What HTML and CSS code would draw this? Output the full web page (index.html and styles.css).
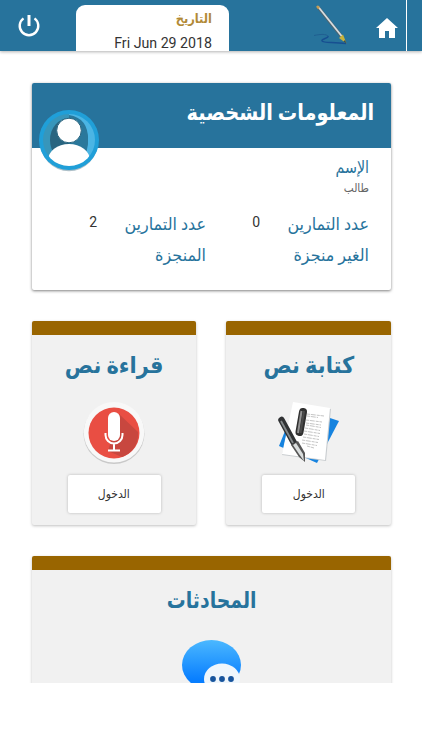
FILE: index.html
```html
<!DOCTYPE html>
<html lang="ar">
<head>
    <meta charset="utf-8">
    <title>المعلومات الشخصية</title>
    <link rel="stylesheet" href="styles.css">
</head>
<body>
<!-- Top bar -->
<header class="topbar">
    <svg class="power-icon" viewBox="0 0 24 24" width="24" height="24">
        <path d="M6.500 4.400A9.300 9.300 0 1 0 17.500 4.400" fill="none" stroke="#fff" stroke-width="2.400"/>
        <path d="M12 1V12" stroke="#fff" stroke-width="3"/>
    </svg>
    <div class="date-box">
        <div class="date-label" dir="rtl">التاريخ</div>
        <div class="date-value">Fri Jun 29 2018</div>
    </div>
    <svg class="pencil-icon" viewBox="0 0 34 40" width="34" height="40">
        <path d="M0 30.500C7 29 12 29 14 31" fill="none" stroke="#205f91" stroke-width="1"/>
        <path d="M14 31C15 33 7 34 8 36S17 37 32 38.500" fill="none" stroke="#174f91" stroke-width="1.500"/>
        <path d="M4 2L28 32" stroke="#4f656f" stroke-width="3.200"/>
        <path d="M4 1.500L28 31.500" stroke="#d9dde0" stroke-width="1.800"/>
        <path d="M3 1L5 3.500" stroke="#c59d54" stroke-width="2.500"/>
        <path d="M25 33L29 29.500L32.500 38.500Z" fill="#c8b33c"/>
        <path d="M29.500 36.500L31 35L32.500 38.500Z" fill="#334b50"/>
    </svg>
    <svg class="home-icon" viewBox="0 0 22 20" width="22" height="20">
        <path d="M11 0L22 10H19V20H13V13H9V20H3V10H0Z" fill="#fff"/>
    </svg>
    <div class="divider"></div>
</header>

<main class="content" dir="rtl">
    <!-- Personal information -->
    <section class="profile-card">
        <h1 class="profile-title"><span class="title-text">المعلومات الشخصية</span></h1>
        <svg class="avatar" viewBox="0 0 60 62" width="60" height="62">
            <defs>
                <clipPath id="avatar-clip"><circle cx="30" cy="30" r="26"/></clipPath>
            </defs>
            <ellipse cx="30" cy="31.300" rx="29" ry="30" fill="#174b63" opacity=".35"/>
            <circle cx="30" cy="30" r="30" fill="#209fd8"/>
            <g clip-path="url(#avatar-clip)">
                <path d="M0 0H30V60H0Z" fill="#3796bb"/>
                <path d="M30 0H60V60H30Z" fill="#4bb5e4"/>
                <ellipse cx="30" cy="30" rx="19" ry="22" fill="#296580"/>
                <path d="M30 5Q49 8 49 29T38 48H30Z" fill="#2a789b"/>
                <ellipse cx="30" cy="50" rx="21" ry="16" fill="#fff"/>
            </g>
            <circle cx="30" cy="20.500" r="12.300" fill="#fff" stroke="#296580" stroke-width="1"/>
        </svg>
        <div class="profile-body">
            <div class="name-label">الإسم</div>
            <div class="name-value">طالب</div>
            <div class="counts">
                <div class="count">
                    <div class="count-label">عدد التمارين<br>الغير منجزة</div>
                    <div class="count-value">0</div>
                </div>
                <div class="count">
                    <div class="count-label">عدد التمارين<br>المنجزة</div>
                    <div class="count-value">2</div>
                </div>
            </div>
        </div>
    </section>

    <!-- Activities -->
    <div class="cards">
        <section class="card">
            <h2 class="card-title">كتابة نص</h2>
            <svg class="card-icon" viewBox="0 0 62 62" width="62" height="62">
                <path d="M46 14L61 19L39 61L1 44L9 24Z" fill="#1683df"/>
                <path d="M16 1L53 7L48 59L4 53Z" fill="#c9cdd0"/>
                <path d="M15 0L52 6L47 58L4 52Z" fill="#fff"/>
                <g stroke="#b5b5b5" stroke-width=".8" stroke-dasharray="3 .8 5 1">
                    <path d="M29 12L46 14M29 14L40 15.500M28 18L44 20M28 21L43 23M28 23L43 25.500M27 26L42 28.500M26 29L42 31.500M26 32L41 34.500M25 35L41 37.500M24 38L40 40.500M24 41L39 43.500M29 44L36 46"/>
                </g>
                <path d="M25 10L21.500 30" stroke="#303030" stroke-width="8" stroke-linecap="round"/>
                <path d="M23.500 9L20 31" stroke="#929292" stroke-width="2"/>
                <path d="M26 9L22.500 31" stroke="#4b4b4b" stroke-width="2"/>
                <path d="M3.500 18L16 41" stroke="#303234" stroke-width="6.500" stroke-linecap="round"/>
                <path d="M3 19L15 41" stroke="#858a8c" stroke-width="1.800"/>
                <path d="M13 43L20 39L27 51L27 60L21 55Z" fill="#555"/>
                <path d="M15 43L18 41L25 52L26 59L21 52Z" fill="#d9dddd"/>
            </svg>
            <button type="button" class="enter-button"><span class="button-text">الدخول</span></button>
        </section>
        <section class="card">
            <h2 class="card-title">قراءة نص</h2>
            <svg class="card-icon" viewBox="0 0 62 62" width="62" height="62">
                <circle cx="31" cy="31.500" r="30.500" fill="#c9c9c9"/>
                <circle cx="31" cy="30.300" r="30.300" fill="#f8f8f8"/>
                <circle cx="31" cy="31" r="25.500" fill="#e94e43"/>
                <path d="M36 12L55 30Q56 48 39 55L25 49Z" fill="#c8473f"/>
                <rect x="25" y="10" width="12" height="29" rx="6" fill="#fff"/>
                <path d="M22.500 31V33A8.500 8.500 0 0 0 39.500 33V31M31 41V48M25 48.500H37" fill="none" stroke="#fff" stroke-width="2"/>
            </svg>
            <button type="button" class="enter-button"><span class="button-text">الدخول</span></button>
        </section>
        <section class="card card-wide">
            <h2 class="card-title chat-title">المحادثات</h2>
            <svg class="card-icon chat-icon" viewBox="0 0 60 60" width="60" height="60">
                <defs>
                    <linearGradient id="chat-blue" x1="0" y1="0" x2="0" y2="1">
                        <stop offset="0" stop-color="#4bb8ff"/>
                        <stop offset=".8" stop-color="#087eff"/>
                    </linearGradient>
                </defs>
                <ellipse cx="29.500" cy="25" rx="29.500" ry="25" fill="url(#chat-blue)"/>
                <ellipse cx="40" cy="39" rx="18" ry="15.500" fill="#eff6fc"/>
                <g fill="#17549d">
                    <circle cx="31" cy="39" r="2.900"/>
                    <circle cx="40" cy="39" r="2.900"/>
                    <circle cx="49" cy="39" r="2.900"/>
                </g>
            </svg>
        </section>
    </div>
</main>
</body>
</html>
```
FILE: styles.css
```css
/* Page */
* {
    box-sizing: border-box;
}

body {
    margin: 0;
    height: 750px;
    overflow: hidden;
    font-family: Roboto, "DejaVu Sans", sans-serif;
    background-color: #fff;
    color: #333;
}

/* Top bar */
.topbar {
    display: flex;
    align-items: flex-start;
    height: 51px;
    background-color: #27739c;
    box-shadow: 0 1px 3px rgba(0, 0, 0, 0.3);
}

.power-icon {
    margin: 14px 0 0 17px;
}

.date-box {
    width: 153px;
    height: 46px;
    margin: 5px 0 0 35px;
    padding-right: 17px;
    border-radius: 9px 9px 0 0;
    background-color: #fff;
    text-align: right;
}

.date-label {
    height: 28px;
    font-size: 13px;
    line-height: 28px;
    font-weight: bold;
    color: #b28a36;
    transform: scaleX(0.88);
    transform-origin: right;
}

.date-value {
    font-size: 14.2px;
    line-height: 20px;
    white-space: nowrap;
}

.pencil-icon {
    margin: 5px 0 0 85px;
}

.home-icon {
    margin: 18px 0 0 28px;
}

.divider {
    width: 1px;
    height: 51px;
    margin-left: 8px;
    background-color: #fff;
}

/* Scrolling area */
.content {
    height: 632px;
    padding: 32px 31px 0 32px;
    overflow: hidden;
}

/* Personal information */
.profile-card {
    position: relative;
    height: 207px;
    border-radius: 2px;
    background-color: #fff;
    box-shadow: 0 1px 3px rgba(0, 0, 0, 0.5);
}

.profile-title {
    height: 65px;
    margin: 0;
    padding-right: 17px;
    border-radius: 2px 2px 0 0;
    background-color: #27739c;
    color: #fff;
    font-size: 22px;
    line-height: 60px;
}

.title-text {
    display: inline-block;
    transform: scaleX(0.88);
    transform-origin: right;
}

.avatar {
    position: absolute;
    left: 7px;
    top: 27px;
}

.profile-body {
    padding: 8px 22px 0 0;
}

.name-label {
    font-size: 17px;
    line-height: 23px;
    color: #27739c;
    transform: scaleX(0.84);
    transform-origin: right;
}

.name-value {
    font-size: 12px;
    line-height: 18px;
    color: #666;
    transform: scaleX(0.88);
    transform-origin: right;
}

.counts {
    display: flex;
    margin-top: 12px;
}

.count {
    display: flex;
    width: 163px;
}

.count-label {
    width: 109px;
    font-size: 17px;
    line-height: 31px;
    white-space: nowrap;
    color: #27739c;
    transform: scaleX(0.94);
    transform-origin: right;
}

.count-value {
    font-size: 14px;
    line-height: 26px;
}

/* Activity cards */
.cards {
    display: grid;
    grid-template-columns: 165px 164px;
    column-gap: 30px;
    row-gap: 31px;
    margin-top: 31px;
}

.card {
    display: flex;
    flex-direction: column;
    align-items: center;
    height: 204px;
    border-top: 14px solid #996500;
    border-radius: 2px;
    background-color: #f1f1f1;
    box-shadow: 0 1px 3px rgba(0, 0, 0, 0.25);
}

.card-wide {
    grid-column: 1 / 3;
}

.card-title {
    height: 67px;
    margin: 0;
    font-size: 23px;
    line-height: 61px;
    color: #27739c;
    transform: scaleX(0.91);
}

.chat-title {
    transform: scaleX(0.82);
}

.card-icon {
    flex: none;
}

.chat-icon {
    margin-top: 3px;
}

.enter-button {
    width: 93px;
    height: 38px;
    margin-top: 11px;
    padding: 0;
    border: none;
    border-radius: 2px;
    background-color: #fff;
    box-shadow: 0 0 3px rgba(0, 0, 0, 0.25);
    font-family: inherit;
    font-size: 12px;
    color: #333;
}

.button-text {
    display: inline-block;
    transform: scaleX(0.9);
}
```
